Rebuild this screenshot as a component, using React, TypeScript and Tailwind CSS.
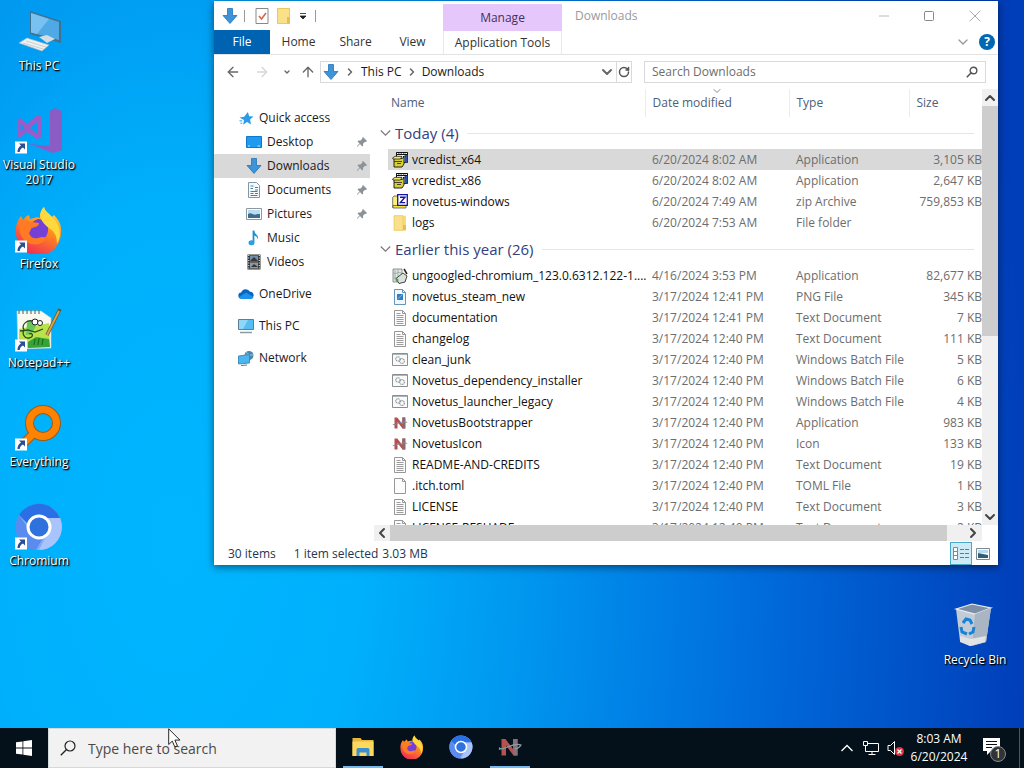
import type { ReactNode } from "react";
import clsx from "clsx";
import { ArrowLeft, ArrowRight, ArrowUp, ChevronDown, ChevronLeft, ChevronRight, ChevronUp, Minus, RotateCw, Square, X } from "lucide-react";

type IconKind = "installer" | "zip" | "folder" | "chromium" | "png" | "text" | "batch" | "novetus" | "blank";

type FileRow = {
  name: string;
  date: string;
  type: string;
  size: string;
  icon: IconKind;
  selected?: boolean;
};

const groups: { title: string; files: FileRow[] }[] = [
  {
    title: "Today (4)",
    files: [
      { name: "vcredist_x64", date: "6/20/2024 8:02 AM", type: "Application", size: "3,105 KB", icon: "installer", selected: true },
      { name: "vcredist_x86", date: "6/20/2024 8:02 AM", type: "Application", size: "2,647 KB", icon: "installer" },
      { name: "novetus-windows", date: "6/20/2024 7:49 AM", type: "zip Archive", size: "759,853 KB", icon: "zip" },
      { name: "logs", date: "6/20/2024 7:53 AM", type: "File folder", size: "", icon: "folder" },
    ],
  },
  {
    title: "Earlier this year (26)",
    files: [
      { name: "ungoogled-chromium_123.0.6312.122-1....", date: "4/16/2024 3:53 PM", type: "Application", size: "82,677 KB", icon: "chromium" },
      { name: "novetus_steam_new", date: "3/17/2024 12:41 PM", type: "PNG File", size: "345 KB", icon: "png" },
      { name: "documentation", date: "3/17/2024 12:41 PM", type: "Text Document", size: "7 KB", icon: "text" },
      { name: "changelog", date: "3/17/2024 12:40 PM", type: "Text Document", size: "111 KB", icon: "text" },
      { name: "clean_junk", date: "3/17/2024 12:40 PM", type: "Windows Batch File", size: "5 KB", icon: "batch" },
      { name: "Novetus_dependency_installer", date: "3/17/2024 12:40 PM", type: "Windows Batch File", size: "6 KB", icon: "batch" },
      { name: "Novetus_launcher_legacy", date: "3/17/2024 12:40 PM", type: "Windows Batch File", size: "4 KB", icon: "batch" },
      { name: "NovetusBootstrapper", date: "3/17/2024 12:40 PM", type: "Application", size: "983 KB", icon: "novetus" },
      { name: "NovetusIcon", date: "3/17/2024 12:40 PM", type: "Icon", size: "133 KB", icon: "novetus" },
      { name: "README-AND-CREDITS", date: "3/17/2024 12:40 PM", type: "Text Document", size: "19 KB", icon: "text" },
      { name: ".itch.toml", date: "3/17/2024 12:40 PM", type: "TOML File", size: "1 KB", icon: "blank" },
      { name: "LICENSE", date: "3/17/2024 12:40 PM", type: "Text Document", size: "3 KB", icon: "text" },
      { name: "LICENSE-RESHADE", date: "3/17/2024 12:40 PM", type: "Text Document", size: "2 KB", icon: "text" },
    ],
  },
];

function DownArrow() {
  return (
    <svg viewBox="0 0 16 16" className="size-4 shrink-0">
      <path d="M5.500.5h5v7H15L8 15.500 1 7.500h4.500z" fill="#3d94d9" stroke="#2674b8" strokeWidth=".8" />
    </svg>
  );
}

function NovetusMark() {
  return (
    <>
      <path d="M2.500 13.500v-11h2.800l5 6.500V2.500h3v11h-2.800l-5-6.500v6.500z" fill="#b5504f" />
      <path d="M10.300 2.500h3v11h-2.800z" fill="#8a6a72" />
      <path d="M.8 9.500c3 1 9-4.500 14.400-2" fill="none" stroke="#7e8c93" strokeWidth=".9" />
    </>
  );
}

function FileIcon({ kind }: { kind: IconKind }) {
  return (
    <svg viewBox="0 0 16 16" className="size-4 shrink-0">
      {kind === "installer" && (
        <>
          <path d="M4.500.5h11v10h-11z" fill="#fff" stroke="#111" />
          <path d="M4.500.5h11v2h-11z" fill="#fff" stroke="#111" />
          <path d="M12.500 3h3v7.500h-3z" fill="#2d55a8" />
          <path d="M6 4.500h8M6 2h8" stroke="#111" strokeDasharray="1.500 1" />
          <path d="M2 6.500h8l2-1.500v7l-2 3H2z" fill="#d8cf35" stroke="#111" strokeWidth=".9" />
          <path d="M.5 6 3 4.300h7L8.500 7H1zM2 9.500h8M5 11.500h4" fill="#f2ec72" stroke="#222" strokeWidth=".8" />
        </>
      )}
      {kind === "zip" && (
        <>
          <path d="M.7 3.500 2 2h4v11.500H.7z" fill="#fdf07a" stroke="#555" strokeWidth=".8" />
          <path d="M1 11.500h13V14H1z" fill="#f7e640" stroke="#555" strokeWidth=".8" />
          <path d="M5.700.7h9.600v10.600H5.700z" fill="#fff" stroke="#1515a3" strokeWidth="1.300" />
          <path d="M8 3.200h5L8.400 8.600h4.800" fill="none" stroke="#1515a3" strokeWidth="1.400" />
        </>
      )}
      {kind === "folder" && (
        <>
          <path d="M2 .7h12v14.600H2z" fill="#f9dc7a" />
          <path d="M2 .7h9v14.600H2z" fill="#fbe08a" stroke="#e8c65c" strokeWidth=".7" />
          <path d="M11 10h3v5.300h-3z" fill="#e6bf4f" />
        </>
      )}
      {kind === "chromium" && (
        <>
          <path d="M1 1h9v13H1z" fill="#dfe7e3" stroke="#777" strokeWidth=".8" />
          <path d="M1 5c3 2 6-3 9 1M2 10h6M3 2v10M6 1v12" stroke="#8fa598" strokeWidth=".8" fill="none" />
          <path d="M4 10.500 11 5l4 3-2 6-6 1.500z" fill="#dbe2de" stroke="#444" />
          <path d="m12 1 3 5" stroke="#222" strokeWidth="1.500" />
          <circle cx="5" cy="12" r="1.500" fill="#46a04e" />
        </>
      )}
      {(kind === "png" || kind === "text" || kind === "blank") && (
        <path
          d="M2.500.5h8l3 3v12h-11z M10.500.5v3h3"
          fill={kind === "png" ? "#f1f8fd" : "#fcfcfc"}
          stroke={kind === "png" ? "#5689b0" : "#8c8c8c"}
          strokeWidth=".9"
        />
      )}
      {kind === "png" && <path d="M5 5h6v6H5z" fill="#2f7fc4" />}
      {kind === "png" && <path d="m5.500 10 5-4.500" stroke="#7fb9e6" fill="none" />}
      {kind === "text" && <path d="M4.500 3.500h4M4.500 5.500h7M4.500 7.500h7M4.500 9.500h7M4.500 11.500h7M4.500 13.500h7" stroke="#929292" strokeWidth=".9" />}
      {kind === "batch" && (
        <>
          <path d="M.5 1.500h15v12H.5z" fill="#fafafa" stroke="#8a8f93" />
          <path d="M1 2.500h14" stroke="#a9b4bb" />
          <circle cx="6" cy="7" r="2.200" fill="none" stroke="#8e979c" strokeWidth="1.100" strokeDasharray="1.400 .5" />
          <circle cx="10" cy="9" r="2.400" fill="none" stroke="#8e979c" strokeWidth="1.100" strokeDasharray="1.400 .5" />
        </>
      )}
      {kind === "novetus" && <NovetusMark />}
    </svg>
  );
}

const places: { label: string; icon: ReactNode; pinned?: boolean; selected?: boolean }[] = [
  {
    label: "Desktop",
    pinned: true,
    icon: (
      <>
        <path d="M.5 2.500h15v11H.5z" fill="#1e9bf0" stroke="#0f78c8" />
        <path d="M2 12h2M11.500 12H14" stroke="#bfe4ff" />
      </>
    ),
  },
  {
    label: "Downloads",
    pinned: true,
    selected: true,
    icon: <path d="M5.500.5h5v7H15L8 15.500 1 7.500h4.500z" fill="#3d94d9" stroke="#2674b8" strokeWidth=".8" />,
  },
  {
    label: "Documents",
    pinned: true,
    icon: (
      <>
        <path d="M2.500.5h8l3 3v12h-11z" fill="#f6fafc" stroke="#8297a3" />
        <path d="M4.500 4h3M9 5.500h3M4.500 6.500h2.500M9 8h3M4.500 9.500h7M4.500 11.500h3M9 11.500h3M4.500 13.500h7" stroke="#3a87b7" />
      </>
    ),
  },
  {
    label: "Pictures",
    pinned: true,
    icon: (
      <>
        <path d="M.5 2.500h15v11H.5z" fill="#fff" stroke="#8c989f" />
        <path d="M2 4h12v4H2z" fill="#b9dcf3" />
        <path d="M2 12V8c3-2 5 1 7 .5s3-.5 5-.5v4z" fill="#3a6d91" />
      </>
    ),
  },
  {
    label: "Music",
    icon: (
      <>
        <path d="M7.500.5v11.500" stroke="#1f8fd3" strokeWidth="1.800" />
        <path d="M8 .5c.5 4 5 4 4 9-1-3-2-3.500-4-4z" fill="#1f8fd3" />
        <ellipse cx="5.500" cy="12.800" rx="3" ry="2.500" fill="#2c9fe0" />
      </>
    ),
  },
  {
    label: "Videos",
    icon: (
      <>
        <path d="M1.500.5h13v15h-13z" fill="#333" />
        <path d="M4 1.500h8v6H4z" fill="#6d8fb5" />
        <path d="M4 8.500h8v6H4z" fill="#8a98a8" />
        <path d="M4 7 8 3l4 4zM5 13l3-3 4 3z" fill="#3f352b" />
        <path d="M2.700 1v14M13.300 1v14" stroke="#ddd" strokeWidth="1.200" strokeDasharray="1 1.500" />
      </>
    ),
  },
];

const roots: { label: string; icon: ReactNode }[] = [
  {
    label: "OneDrive",
    icon: (
      <>
        <path d="M3.500 12.500a3 3 0 0 1-.3-6A4.800 4.800 0 0 1 12 5.800a3.400 3.400 0 0 1 1 6.700z" fill="#0a64c2" />
        <path d="m1 11 7-4.500L15.500 11a2.500 2.500 0 0 1-2.500 2H4a3 3 0 0 1-3-2z" fill="#1c92e8" />
      </>
    ),
  },
  {
    label: "This PC",
    icon: (
      <>
        <path d="M.5 1.500h15v10H.5z" fill="#56bdf2" stroke="#5a7f96" />
        <path d="M1 2h9L5 11H1z" fill="#8fd7fa" />
        <path d="M2 14.500h12" stroke="#8f9ba2" strokeWidth="1.500" />
      </>
    ),
  },
  {
    label: "Network",
    icon: (
      <>
        <circle cx="11" cy="5.500" r="4.500" fill="#4c88ad" />
        <path d="M8 2c3 2 4 5 3 8M7 5h8" stroke="#a6d5ee" fill="none" strokeWidth=".8" />
        <path d="m.5 6 11-1.500v8.500L.5 14z" fill="#4cb5ee" stroke="#2b81b6" strokeWidth=".8" />
        <path d="M3 15.500 9 15" stroke="#547c92" />
      </>
    ),
  },
];

function Pin() {
  return (
    <svg viewBox="0 0 12 12" className="size-3">
      <path d="m7 1 4 4-1 1-1-.3-2 2 .1 2-1 .9L4 8 1.300 10.700.8 11.200l.5-1.500L3.500 7.500 1.500 5.400l1-.9 2 .1 2-2L6 2z" fill="#8b9399" />
    </svg>
  );
}

function ShortcutArrow() {
  return (
    <>
      <path d="M0 34.500h12v12H0z" fill="#fff" />
      <path d="M4 36.500h6v6l-2-2c-2 1-3 2.300-3.300 4.500H2.500c-.1-3 1.200-5 3.500-6.500z" fill="#2b4d93" />
    </>
  );
}

function FirefoxArt() {
  return (
    <>
      <defs>
        <linearGradient id="fx" x1=".8" y1="0" x2=".3" y2="1">
          <stop offset="0" stopColor="#ffe14a" />
          <stop offset=".45" stopColor="#ff8a1e" />
          <stop offset="1" stopColor="#f0285a" />
        </linearGradient>
      </defs>
      <path d="M29 1c1 5 6 7 8 10l2-2c5 5 8 11 7 18A22.500 22.500 0 0 1 1 27C0 20 3 14 6 10l2 4c3-3 3-4 6-5l1 4c4-1 7-2 10-1 0-5 1-8 4-11z" fill="url(#fx)" />
      <path d="M14 24c0-6 4-9 9-11 6 0 11 4 10 12s-8 10-13 9-7-5-6-10z" fill="#7540d6" />
      <path d="M4 15c5-4 9 1 13 1l7 1c0 4-5 4-7 5s-1 3-3 5c2 5 5 6 9 5 5-2 9-1 7 2-5 7-20 6-24-5-2-5-2-10-2-14z" fill="#ff7a22" />
      <path d="M29 1c1 5 6 7 8 10 9 8 10 19 5 27 0-8-2-12-8-16-6-4-9-10-9-13 1-4 2-6 4-8z" fill="#ffd83d" />
    </>
  );
}

function ChromiumArt() {
  return (
    <>
      <circle cx="24" cy="24" r="23" fill="#86aaf3" />
      <path d="M4 12a23 23 0 0 1 41 3H24a9 9 0 0 0-9 8z" fill="#2a6fe4" />
      <path d="M4 12A23 23 0 0 0 21 47l10-17a9 9 0 0 1-16-2z" fill="#5a8cf0" />
      <path d="M45 15a23 23 0 0 1-21 32l9-18c3-5 1-10-3-14z" fill="#a9c4fa" />
      <circle cx="24" cy="24" r="11" fill="#2f72dd" stroke="#fff" strokeWidth="3" />
    </>
  );
}

const desktopIcons: { label: string; art: ReactNode }[] = [
  {
    label: "This PC",
    art: (
      <>
        <path d="m15 3 31 10v22L15 26z" fill="#3f7291" />
        <path d="m16 5 28 9v18L16 24.500z" fill="#4fa9e4" />
        <path d="m16 5 18 6-12 15-6-1.500z" fill="#78c1f0" />
        <path d="m24 29 8-2 8 4-8 4z" fill="#d3dde2" />
        <path d="m4 35 8-5 22 7-7 6z" fill="#eef1f2" stroke="#aab6bb" strokeWidth=".7" />
        <path d="m8 35 20 6M11 33l20 6" stroke="#b6bfc4" strokeWidth=".7" />
      </>
    ),
  },
  {
    label: "Visual Studio 2017",
    art: (
      <>
        <path d="m35 4 4-3 8 3v39l-9 3-24-9 21 2z" fill="#8a5cc4" />
        <path d="M22 8 12 17 5 11l-3 2v16l3 2 7-6 10 7 5-2V10z" fill="#9a5cc8" />
        <path d="M22 15v12l-7-6zM5.500 17v8l4-4z" fill="#079bf4" />
        <ShortcutArrow />
      </>
    ),
  },
  {
    label: "Firefox",
    art: (
      <>
        <FirefoxArt />
        <ShortcutArrow />
      </>
    ),
  },
  {
    label: "Notepad++",
    art: (
      <>
        <path d="M2 6h24l10 7v30l-33 1z" fill="#f8faf2" stroke="#ccd2c4" strokeWidth=".6" />
        <path d="m4 24 30-6 1 24-31 1z" fill="#b9e24b" />
        <path d="m13 37 8-5 13 2 1 8-22 1z" fill="#36a336" />
        <path d="M4 5v4M8 5v4M12 5v4M16 5v4M20 5v4M24 5v4" stroke="#6c756d" strokeWidth="1.200" />
        <path d="M12 18c5-5 11-1 8 5l-4 6-5 1z" fill="#69c65a" />
        <path d="M20 17c-8-4-14 3-11 8-2 3 0 9 5 8s4-6 0-4M5 26l8-1 7 2 8-3" fill="none" stroke="#294c24" strokeWidth="1.300" />
        <path d="m19 40 1-6m3 6 1-7m3 7 1-6" stroke="#1c6b22" strokeWidth="1.200" />
        <circle cx="20" cy="17" r="3" fill="#fff" stroke="#222" />
        <circle cx="25" cy="18" r="2.500" fill="#fff" stroke="#222" />
        <path d="m32 30 13-26" stroke="#6b5530" strokeWidth="3.500" />
        <path d="m32 30 12-24" stroke="#d8a44a" strokeWidth="2" />
        <ShortcutArrow />
      </>
    ),
  },
  {
    label: "Everything",
    art: (
      <>
        <path d="M18 30 7 41" stroke="#9a5a1c" strokeWidth="9" />
        <circle cx="28" cy="19" r="13.500" fill="none" stroke="#9a5a1c" strokeWidth="9" />
        <path d="M19 29 7 41" stroke="#ff8200" strokeWidth="7" />
        <circle cx="28" cy="19" r="13.500" fill="none" stroke="#ff8200" strokeWidth="7" />
        <ShortcutArrow />
      </>
    ),
  },
  {
    label: "Chromium",
    art: (
      <>
        <ChromiumArt />
        <ShortcutArrow />
      </>
    ),
  },
];

function DesktopIcon({ label, children }: { label: string; children: ReactNode }) {
  return (
    <button className="flex w-[76px] flex-col items-center gap-[2px] text-[12px] leading-[15px] text-white [text-shadow:1px_1px_2px_#000,1px_1px_1px_#000]">
      <svg viewBox="0 0 48 48" className="size-12">
        {children}
      </svg>
      <span>{label}</span>
    </button>
  );
}

function RibbonTab({ children }: { children: ReactNode }) {
  return <button className="h-full w-[57px] text-center text-[#333]">{children}</button>;
}

function TitleBar() {
  return (
    <header className="flex h-[54px] border-b border-[#e2e3e4]">
      <div className="flex flex-col">
        <div className="flex h-[30px] items-center gap-2 pl-2">
          <DownArrow />
          <span className="ml-[-2px] h-3 w-px bg-[#9a9a9a]" />
          <button aria-label="Properties" className="ml-[2px]">
            <svg viewBox="0 0 14 16" className="h-4 w-[14px]">
              <path d="M1 .5h12v15H1z" fill="#fff" stroke="#888" />
              <path d="m4 8 2.500 3L11 5" fill="none" stroke="#cf6a48" strokeWidth="1.600" />
            </svg>
          </button>
          <button aria-label="New folder">
            <svg viewBox="0 0 14 16" className="h-4 w-[14px]">
              <path d="M.5.5h12v15H.5z" fill="#fbe08a" stroke="#ebc95f" />
              <path d="M10 9h3v6.500h-3z" fill="#e6bf4f" />
            </svg>
          </button>
          <button aria-label="Customize Quick Access Toolbar">
            <svg viewBox="0 0 8 8" className="size-2">
              <path d="M1 1.500h6M1 4h6L4 7z" fill="#222" stroke="#222" strokeWidth=".8" />
            </svg>
          </button>
          <span className="h-3 w-px bg-[#9a9a9a]" />
        </div>
        <div className="flex h-6 items-center">
          <button className="h-full w-14 bg-[#0063b1] text-white">File</button>
          <RibbonTab>Home</RibbonTab>
          <RibbonTab>Share</RibbonTab>
          <RibbonTab>View</RibbonTab>
        </div>
      </div>
      <div className="ml-[2px] flex w-[119px] flex-col pt-[3px]">
        <div className="grid h-[27px] place-items-center bg-[#e6c7fc] text-[#44305a]">Manage</div>
        <button className="flex-1 border-x border-[#ece6f1] whitespace-nowrap text-[#333]">Application Tools</button>
      </div>
      <div className="flex flex-1 flex-col">
        <div className="flex h-[30px] items-center pl-[13px]">
          <h1 className="flex-1 text-[#9a9a9a]">Downloads</h1>
          <button aria-label="Minimize" className="grid h-full w-[45px] place-items-center">
            <Minus className="size-4 text-[#999]" strokeWidth={1} />
          </button>
          <button aria-label="Maximize" className="grid h-full w-[46px] place-items-center">
            <Square className="size-3 text-[#888]" strokeWidth={2} />
          </button>
          <button aria-label="Close" className="grid h-full w-[46px] place-items-center">
            <X className="size-5 text-[#999]" strokeWidth={1} />
          </button>
        </div>
        <div className="flex h-[22px] items-center justify-end gap-2 pr-[3px]">
          <ChevronDown className="size-4 text-[#999]" />
          <button aria-label="Help" className="grid size-4 place-items-center rounded-full bg-[#0067b3] text-[12px] leading-none font-bold text-white">
            ?
          </button>
        </div>
      </div>
    </header>
  );
}

function AddressBar() {
  return (
    <div className="flex h-[34px] items-center pr-[12px] pl-[11px]">
      <div className="flex w-[95px] items-center gap-[13px] text-[#666]">
        <button aria-label="Back"><ArrowLeft className="size-4" strokeWidth={2} /></button>
        <button aria-label="Forward"><ArrowRight className="size-4 text-[#d6d6d6]" strokeWidth={2} /></button>
        <button aria-label="Recent locations"><ChevronDown className="size-2" strokeWidth={4} /></button>
        <button aria-label="Up" className="-ml-1"><ArrowUp className="size-4" strokeWidth={2} /></button>
      </div>
      <div className="flex h-[22px] flex-1 items-center border border-[#d9d9d9] pl-[2px]">
        <DownArrow />
        <ChevronRight className="mx-[5px] size-3 text-[#666]" strokeWidth={3} />
        <button>This PC</button>
        <ChevronRight className="mx-[4px] size-3 text-[#666]" strokeWidth={3} />
        <button className="flex-1 text-left">Downloads</button>
        <button aria-label="Previous locations"><ChevronDown className="mr-[1px] size-4 text-[#666]" strokeWidth={3} /></button>
        <button aria-label="Refresh" className="grid h-full w-[15px] place-items-center border-l border-[#d9d9d9]">
          <RotateCw className="size-3 text-[#555]" strokeWidth={3} />
        </button>
      </div>
      <label className="ml-[12px] flex h-[22px] w-[342px] items-center border border-[#d9d9d9] px-[7px]">
        <input type="search" aria-label="Search Downloads" placeholder="Search Downloads" className="min-w-0 flex-1 outline-none placeholder:text-[#6d6d6d]" />
        <svg viewBox="0 0 12 12" className="size-3">
          <circle cx="7.500" cy="4.500" r="3.300" fill="none" stroke="#555" strokeWidth="1.400" />
          <path d="M5 7 .8 11.200" stroke="#555" strokeWidth="1.600" />
        </svg>
      </label>
    </div>
  );
}

function Sidebar() {
  return (
    <nav className="w-40 shrink-0 pt-[17px]">
      <button className="flex h-6 items-center gap-[5px] pl-[25px]">
        <svg viewBox="0 0 16 16" className="size-[15px]">
          <path d="m9.500 1 1.300 4.500 4.700.3-3.700 3.200 1 5.500-4.300-2.800-4 3 .8-5L.5 7l5-.8z" fill="#2b9bea" />
          <path d="M.5 10.500h3M1.500 13h2" stroke="#2b9bea" />
        </svg>
        Quick access
      </button>
      {places.map((p) => (
        <button key={p.label} className={clsx("flex h-6 w-[156px] items-center gap-[5px] pr-[2px] pl-8", p.selected && "bg-[#d9d9d9]")}>
          <svg viewBox="0 0 16 16" className="size-4">
            {p.icon}
          </svg>
          <span className="flex-1 text-left">{p.label}</span>
          {p.pinned && <Pin />}
        </button>
      ))}
      {roots.map((r) => (
        <button key={r.label} className="mt-2 flex h-6 items-center gap-[5px] pl-6">
          <svg viewBox="0 0 16 16" className="size-4">
            {r.icon}
          </svg>
          {r.label}
        </button>
      ))}
    </nav>
  );
}

function FileTable() {
  return (
    <table className="w-full table-fixed border-collapse text-left text-[#6d6d6d]">
      <colgroup>
        <col />
        <col className="w-[144px]" />
        <col className="w-[120px]" />
        <col className="w-[73px]" />
      </colgroup>
      <thead>
        <tr className="h-7 text-[#4c607a]">
          <th className="pl-[17px] font-normal">Name</th>
          <th className="relative border-l border-[#ececec] pl-[7px] font-normal">
            Date modified
            <ChevronDown className="absolute -top-1 left-[65px] size-3 text-[#888]" strokeWidth={2} />
          </th>
          <th className="border-l border-[#ececec] pl-[7px] font-normal">Type</th>
          <th className="border-l border-[#ececec] pl-[7px] font-normal">Size</th>
        </tr>
      </thead>
      {groups.map((g) => (
        <tbody key={g.title}>
          <tr className="h-8">
            <th colSpan={4} className="p-0 font-normal">
              <div className="flex items-center gap-1 pr-2 pl-[6px] text-[15px] leading-5 text-[#33407f]">
                <svg viewBox="0 0 11 8" className="h-2 w-[11px]">
                  <path d="m.8 1.500 4.700 4.700 4.700-4.700" fill="none" stroke="#777" strokeWidth="1.100" />
                </svg>
                {g.title}
                <span className="ml-1 h-px flex-1 bg-[#e6e6e6]" />
              </div>
            </th>
          </tr>
          {g.files.map((f) => (
            <tr key={f.name} className="h-[21px]">
              <td className="p-0">
                <div className={clsx("ml-[14px] flex h-[21px] items-center gap-1 pl-1 whitespace-nowrap text-[#111]", f.selected && "bg-[#d9d9d9]")}>
                  <FileIcon kind={f.icon} />
                  {f.name}
                </div>
              </td>
              <td className={clsx("p-0 pl-[7px]", f.selected && "bg-[#d9d9d9]")}>{f.date}</td>
              <td className={clsx("p-0 pl-[7px] whitespace-nowrap", f.selected && "bg-[#d9d9d9]")}>{f.type}</td>
              <td className={clsx("p-0 text-right whitespace-nowrap", f.selected && "bg-[#d9d9d9]")}>{f.size}</td>
            </tr>
          ))}
        </tbody>
      ))}
    </table>
  );
}

function ExplorerWindow() {
  return (
    <section className="absolute top-px right-[26px] left-[214px] flex h-[564px] flex-col bg-white text-[12px] leading-4 text-[#1a1a1a] shadow-[0_2px_8px_rgba(0,0,0,0.5)]">
      <TitleBar />
      <AddressBar />
      <div className="flex min-h-0 flex-1">
        <Sidebar />
        <div className="flex min-w-0 flex-1 flex-col">
          <div className="flex min-h-0 flex-1">
            <div className="min-w-0 flex-1 overflow-hidden">
              <FileTable />
            </div>
            <div className="flex w-4 flex-col bg-[#f0f0f0] text-[#444]">
              <button aria-label="Scroll up" className="grid h-[17px] place-items-center"><ChevronUp className="size-4" strokeWidth={3} /></button>
              <div className="h-[230px] bg-[#cdcdcd]" />
              <button aria-label="Scroll down" className="mt-auto grid h-4 place-items-center"><ChevronDown className="size-4" strokeWidth={3} /></button>
            </div>
          </div>
          <div className="mr-4 flex h-4 bg-[#f0f0f0] text-[#444]">
            <button aria-label="Scroll left" className="grid w-4 place-items-center"><ChevronLeft className="size-4" strokeWidth={3} /></button>
            <div className="flex-1 bg-[#cdcdcd]" />
            <button aria-label="Scroll right" className="ml-[17px] grid w-[18px] place-items-center"><ChevronRight className="size-4" strokeWidth={3} /></button>
          </div>
        </div>
      </div>
      <footer className="flex h-6 items-center pt-px pr-2 pl-[14px] text-[#24364f]">
        <span className="mr-[18px]">30 items</span>
        <span className="mr-[4px]">1 item selected</span>
        <span>3.03 MB</span>
        <button aria-label="Details view" className="mr-1 ml-auto grid h-[23px] w-[22px] place-items-center border border-[#4ba6c8] bg-[#cdeaf7]">
          <svg viewBox="0 0 18 15" className="h-[15px] w-[18px]">
            <path d="M1.500 1.500h4v12h-4zM1.500 5.500h4M1.500 9.500h4" fill="#fff" stroke="#7d8a90" />
            <path d="M8 3.500h4M13 3.500h4M8 7.500h4M13 7.500h4M8 11.500h4M13 11.500h4" stroke="#557f93" />
          </svg>
        </button>
        <button aria-label="Large icons view">
          <svg viewBox="0 0 14 12" className="h-3 w-[14px]">
            <path d="M.5.5h13v11H.5z" fill="#fff" stroke="#7a8a92" />
            <path d="M2 2h10v3H2z" fill="#b5dbef" />
            <path d="M2 10V5l5 1 5 1v3z" fill="#2c6177" />
          </svg>
        </button>
      </footer>
    </section>
  );
}

function TaskButton({ label, open, children }: { label: string; open?: boolean; children: ReactNode }) {
  return (
    <button aria-label={label} className="flex w-12 flex-col items-center">
      <span className="grid h-[38px] place-items-center">
        <svg viewBox="0 0 48 48" className="size-6">
          {children}
        </svg>
      </span>
      {open && <span className="h-[2px] w-10 bg-[#76b9ed]" />}
    </button>
  );
}

function Taskbar() {
  return (
    <footer className="relative flex h-10 bg-[#04111a] text-white">
      <button aria-label="Start" className="grid w-12 place-items-center">
        <svg viewBox="0 0 16 16" className="size-4" fill="#fff">
          <path d="m0 2.300 6.500-.9v6.200H0zM7.300 1.300 16 0v7.600H7.300zM0 8.400h6.500v6.200L0 13.700zM7.300 8.400H16V16l-8.700-1.200z" />
        </svg>
      </button>
      <label className="flex w-72 items-center gap-3 border border-[#d4d9dc] bg-[#f2f2f2] pl-[11px]">
        <svg viewBox="0 0 16 16" className="size-4">
          <circle cx="10" cy="6" r="5" fill="none" stroke="#222" strokeWidth="1.200" />
          <path d="M6.500 9.500.8 15.200" stroke="#222" strokeWidth="1.300" />
        </svg>
        <input type="search" aria-label="Type here to search" placeholder="Type here to search" className="min-w-0 flex-1 text-[14px] outline-none placeholder:text-[#4a4a4a]" />
      </label>
      <div className="ml-[3px] flex gap-px">
        <TaskButton label="File Explorer" open>
          <path d="M3 6h16l3 4h23v32H3z" fill="#e9b73b" />
          <path d="M3 13h42v29H3z" fill="#ffd95e" />
          <path d="M11 42V30c0-3 2-4 4-4h18c2 0 4 1 4 4v12h-6v-7H17v7z" fill="#3c8fd0" />
        </TaskButton>
        <TaskButton label="Firefox">
          <FirefoxArt />
        </TaskButton>
        <TaskButton label="Chromium">
          <ChromiumArt />
        </TaskButton>
        <TaskButton label="Novetus" open>
          <path d="M7 41V8h8l15 20V8h9v33h-8L16 21v20z" fill="#b8504f" />
          <path d="M30 8h9v33h-8z" fill="#83727a" />
          <path d="M2 27c9 6 28-14 44-7-3 6-7 7-12 8" fill="none" stroke="#8f9ba0" strokeWidth="2.500" />
          <path d="m2 24 4 3-4 3z" fill="#38c7b4" />
        </TaskButton>
      </div>
      <div className="ml-auto flex items-center">
        <button aria-label="Show hidden icons" className="mr-2">
          <svg viewBox="0 0 14 14" className="size-[14px]">
            <path d="m1.500 10 5.500-5.500 5.500 5.500" fill="none" stroke="#fff" strokeWidth="1.300" />
          </svg>
        </button>
        <button aria-label="Network" className="mr-2">
          <svg viewBox="0 0 17 16" className="h-4 w-[17px]" fill="none" stroke="#fff">
            <path d="M5.500 3.500h11v8H3.500V8M10 11.500v3M6.500 14.500h7" />
            <path d="M1.500 1.500h4v4h-4zM3.500 5.500V8" />
          </svg>
        </button>
        <button aria-label="Volume muted" className="mr-1">
          <svg viewBox="0 0 17 16" className="h-4 w-[17px]">
            <path d="M1 5.500h2.500l4-4v13l-4-4H1z" fill="none" stroke="#fff" />
            <circle cx="12.500" cy="11.500" r="4.500" fill="#d9363e" />
            <path d="m10.500 9.500 4 4m0-4-4 4" stroke="#fff" strokeWidth="1.200" />
          </svg>
        </button>
        <button className="w-[62px] text-center text-[12px] leading-[18px] whitespace-nowrap">
          8:03 AM
          <br />
          6/20/2024
        </button>
        <button aria-label="Notifications" className="relative mr-[13px] ml-3">
          <svg viewBox="0 0 24 24" className="size-6">
            <path d="M1 2h17v13H9l-4 4v-4H1z" fill="#fff" />
            <path d="M4 5.500h11M4 8.500h11M4 11.500h6" stroke="#04111a" strokeWidth="1.200" />
          </svg>
          <span className="absolute top-[10px] left-[8px] grid size-4 place-items-center rounded-full border border-[#8a8a8a] bg-[#2e3439] text-[12px] leading-none">1</span>
        </button>
        <button aria-label="Show desktop" className="h-10 w-[5px] border-l border-[#4b565e]" />
      </div>
      <svg viewBox="0 0 14 20" className="pointer-events-none absolute top-0 left-[168px] h-5 w-[14px]">
        <path d="M.7.8v15.700l3.600-3.400 2.500 5.800 2.600-1.100-2.500-5.700h5z" fill="#fff" stroke="#111" strokeWidth=".9" />
      </svg>
    </footer>
  );
}

export default function App() {
  return (
    <div className="flex h-screen flex-col overflow-hidden bg-[radial-gradient(ellipse_84%_200%_at_17%_70%,#00b6ff_0%,#00b0fc_22%,#0098f0_40%,#006cdc_68%,#003db8_100%)] font-['Open_Sans','Noto_Sans',sans-serif]">
      <main className="relative flex-1">
        <div className="grid w-fit auto-rows-[99px] items-start px-px pt-2">
          {desktopIcons.map((d) => (
            <DesktopIcon key={d.label} label={d.label}>
              {d.art}
            </DesktopIcon>
          ))}
        </div>
        <ExplorerWindow />
        <div className="absolute top-[602px] right-[11px]">
          <DesktopIcon label="Recycle Bin">
            <path d="m5 7 16-5 19 4-5 34-16 4-10-5z" fill="#c3ccd6" />
            <path d="m5 7 16-5 19 4-16 6z" fill="#7f8fa6" stroke="#e8eef3" strokeWidth="1.200" />
            <path d="m24 12 16-6-5 34-14 4z" fill="#aab5c3" />
            <path d="m9 34 10 3 16-3-1 6-15 4-10-4z" fill="#e0e2e3" />
            <path d="m12 21 3-4 4 1 2 4M10 25l1 5 5 2M23 25l-1 5-4 2" fill="none" stroke="#1683d6" strokeWidth="3" />
          </DesktopIcon>
        </div>
      </main>
      <Taskbar />
    </div>
  );
}
